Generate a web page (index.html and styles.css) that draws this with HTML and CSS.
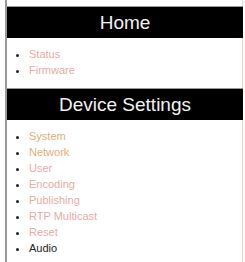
FILE: index.html
```html
<!DOCTYPE html>
<html lang="en">
<head>
    <meta charset="UTF-8">
    <meta name="viewport" content="width=device-width, initial-scale=1.0">
    <title>Menu</title>
    <link rel="stylesheet" href="styles.css">
</head>
<body>
    <div class="menu">
        <h2>Home</h2>
        <ul>
            <li><a href="#">Status</a></li>
            <li><a href="#">Firmware</a></li>
        </ul>
        <h2>Device Settings</h2>
        <ul>
            <li><a href="#" class="warm">System</a></li>
            <li><a href="#" class="warm">Network</a></li>
            <li><a href="#">User</a></li>
            <li><a href="#">Encoding</a></li>
            <li><a href="#">Publishing</a></li>
            <li><a href="#">RTP Multicast</a></li>
            <li><a href="#">Reset</a></li>
            <li><a href="#" class="current">Audio</a></li>
        </ul>
    </div>
</body>
</html>
```

FILE: styles.css
```css
body {
    margin: 0;
    padding: 0;
    background: #fff;
    font-family: "Liberation Sans", Arial, sans-serif;
}
.menu {
    margin-left: 5px;
    margin-right: 2px;
    height: 262px;
    padding-top: 6px;
    box-sizing: border-box;
    border-left: 2px solid #9a9a9a;
    border-right: 1px solid #f3d6c4;
}
h2 {
    margin: 0 -1px 0 0;
    height: 31px;
    line-height: 31px;
    background: #000;
    color: #f2f2f2;
    font-size: 19px;
    font-weight: normal;
    text-align: center;
    border-top: 1px solid #999;
}
ul {
    margin: 0;
    padding: 8px 0 10px 22px;
    font-size: 11px;
    line-height: 16px;
}
li {
    color: #222;
}
a {
    color: #e6aca4;
    text-decoration: none;
}
a.warm {
    color: #e0ae7a;
}
a.current {
    color: #222;
}
```
